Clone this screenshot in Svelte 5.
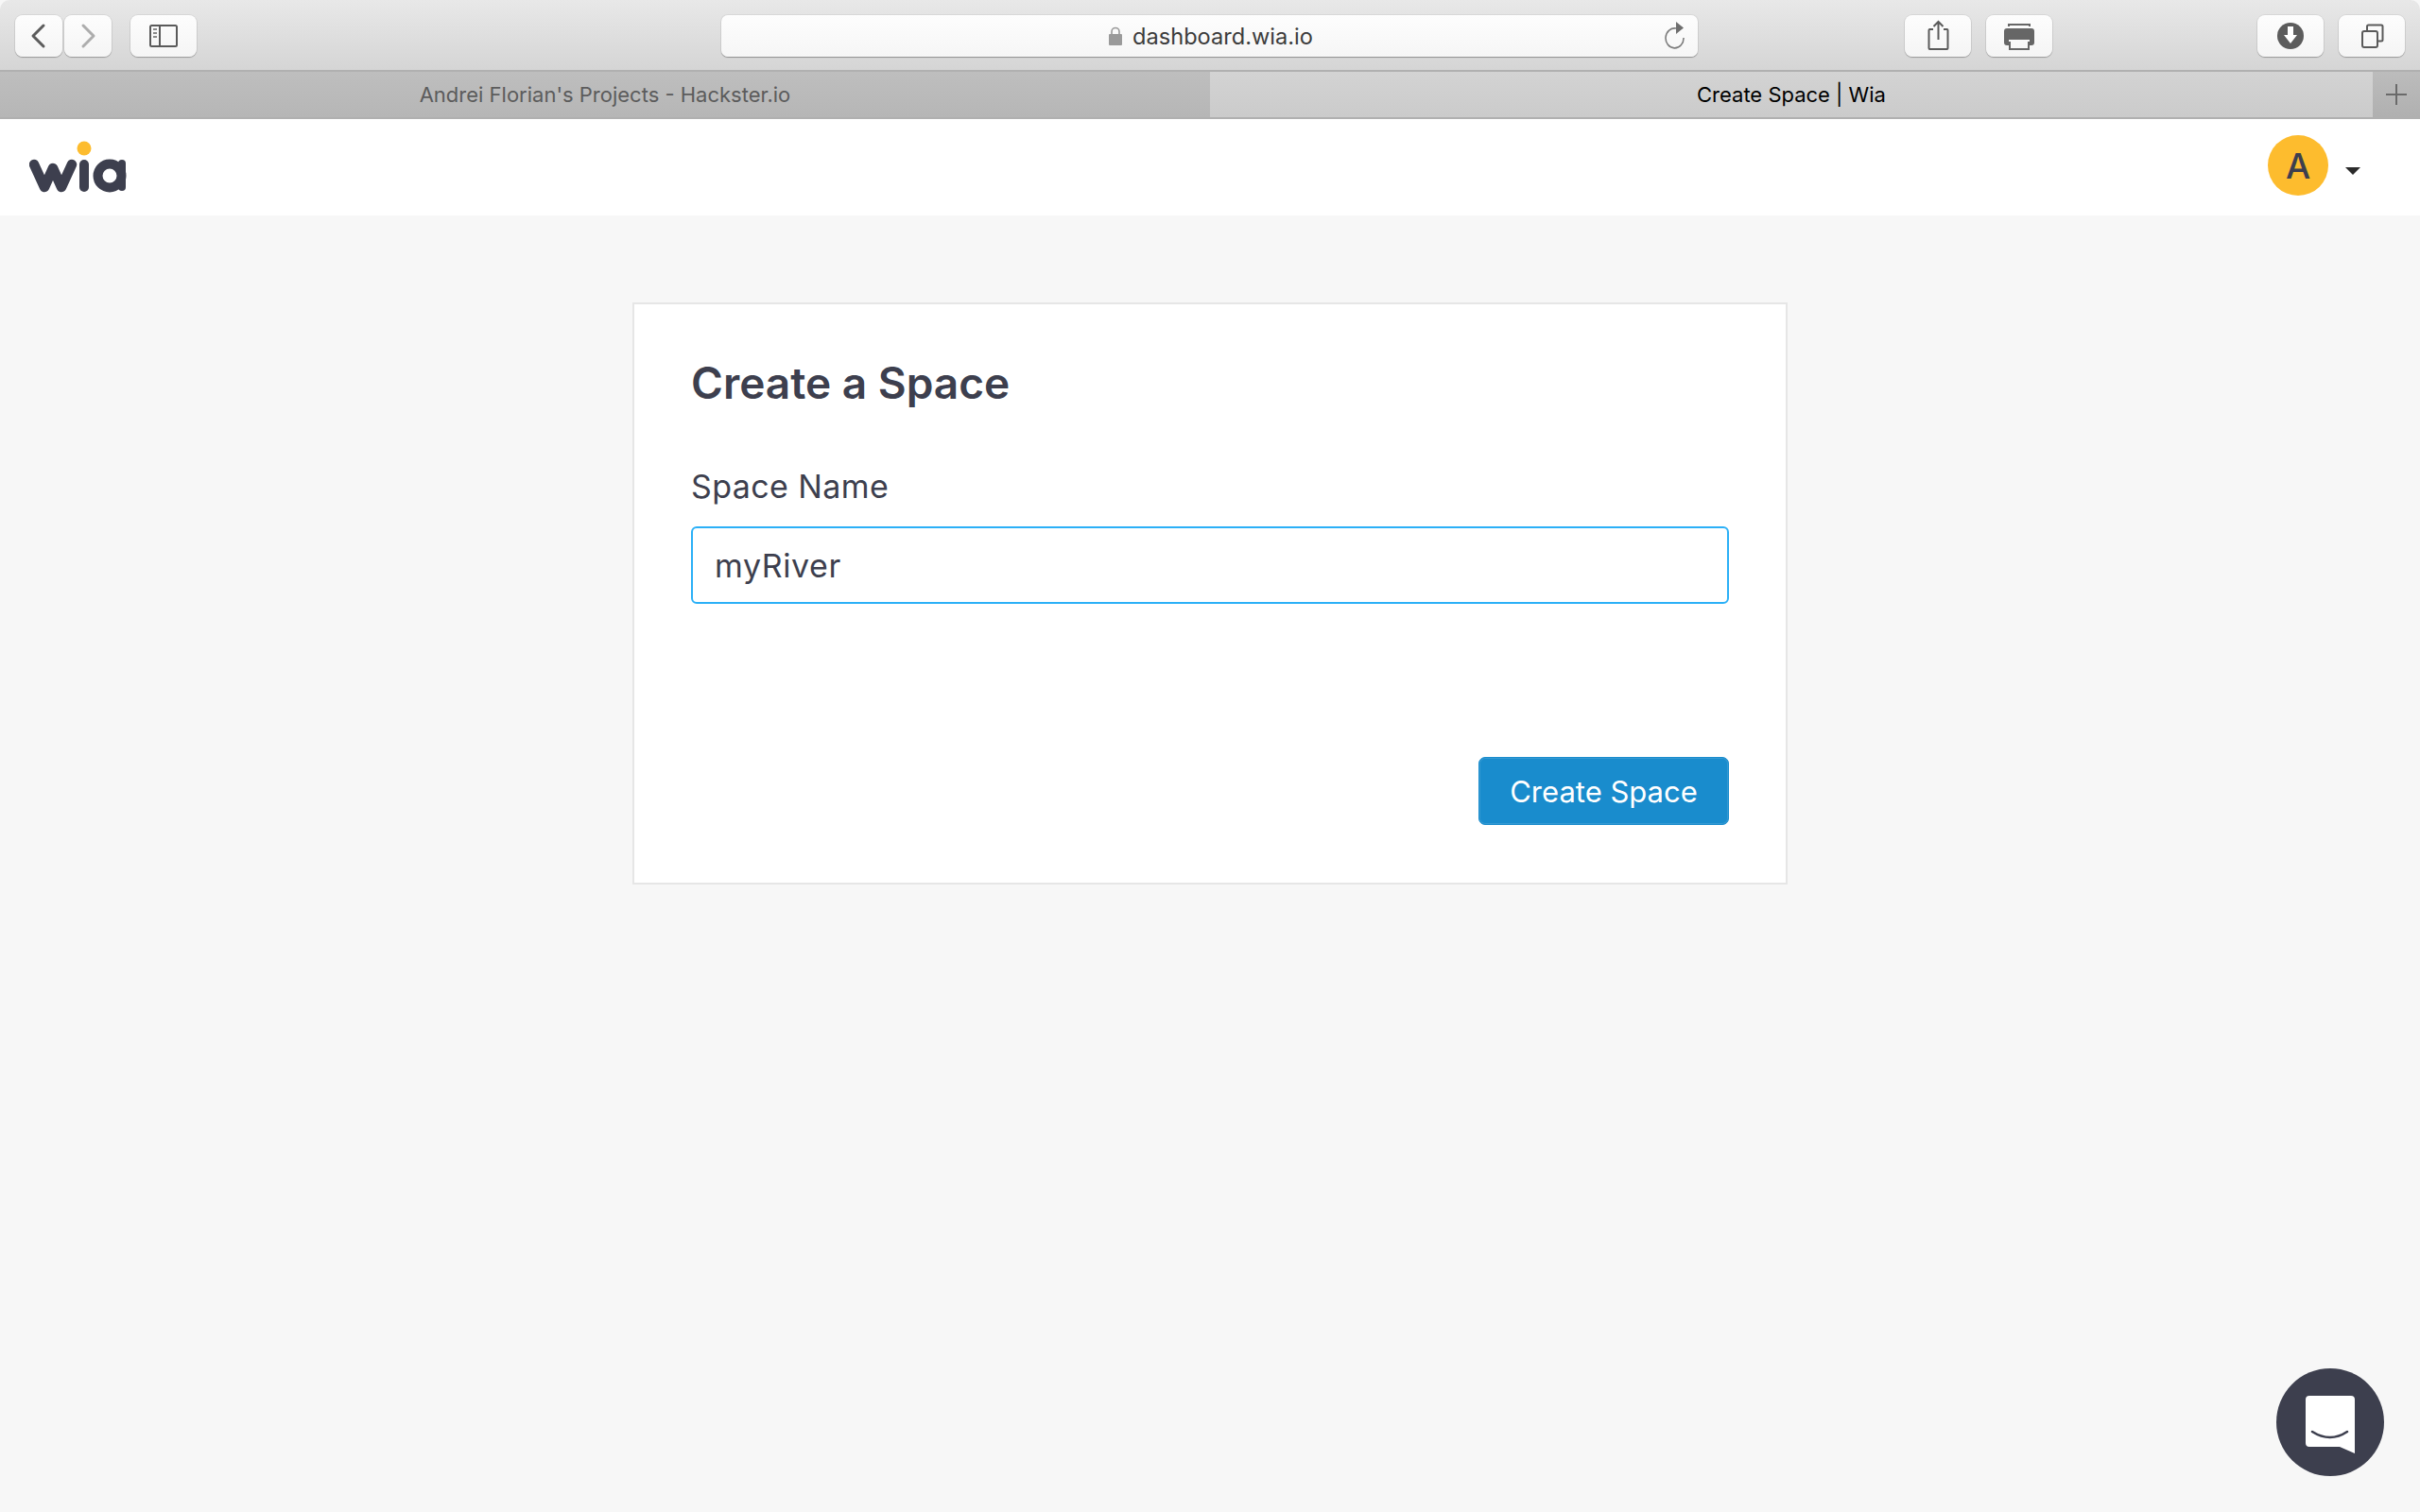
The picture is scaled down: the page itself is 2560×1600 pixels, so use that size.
<script>
	let spaceName = 'myRiver';
</script>

<div class="window">
	<div class="toolbar">
		<div class="group">
			<div class="nav-pair">
				<button class="tool nav" aria-label="Back">
					<svg width="50" height="44" viewBox="0 0 50 44"><path d="M30 11 L19 22 L30 33" fill="none" stroke="#5c5c5c" stroke-width="3" stroke-linecap="round" stroke-linejoin="round"/></svg>
				</button>
				<button class="tool nav" aria-label="Forward">
					<svg width="50" height="44" viewBox="0 0 50 44"><path d="M20 11 L31 22 L20 33" fill="none" stroke="#adadad" stroke-width="3" stroke-linecap="round" stroke-linejoin="round"/></svg>
				</button>
			</div>
			<button class="tool wide" aria-label="Sidebar">
				<svg width="70" height="44" viewBox="0 0 70 44">
					<rect x="21" y="11" width="28" height="22" rx="1.5" fill="none" stroke="#5a5a5a" stroke-width="2"/>
					<path d="M31 11 V33" stroke="#5a5a5a" stroke-width="2"/>
					<path d="M24 15 H28 M24 19 H28 M24 23 H28" stroke="#8a8a8a" stroke-width="2"/>
				</svg>
			</button>
		</div>

		<div class="url">
			<span class="address">
				<svg width="16" height="20" viewBox="0 0 16 20"><path d="M4 9 V5.5 a4 4 0 0 1 8 0 V9" fill="none" stroke="#9a9a9a" stroke-width="1.6"/><rect x="1" y="8" width="14" height="12" rx="1" fill="#9a9a9a"/></svg>
				dashboard.wia.io
			</span>
			<svg class="reload" width="24" height="32" viewBox="0 0 24 32"><path d="M13 8 A9.5 10.5 0 1 0 21 18" fill="none" stroke="#7c7c7c" stroke-width="1.6"/><path d="M13 1 L21 7.5 L13 14 Z" fill="#6e6e6e"/></svg>
		</div>

		<div class="group right">
			<div class="pair">
				<button class="tool wide" aria-label="Share">
					<svg width="70" height="44" viewBox="0 0 70 44">
						<path d="M30 17 H26.5 a1 1 0 0 0 -1 1 V37 a1 1 0 0 0 1 1 H44.5 a1 1 0 0 0 1 -1 V18 a1 1 0 0 0 -1 -1 H41" transform="translate(0 -2)" fill="none" stroke="#5a5a5a" stroke-width="2"/>
						<path d="M35.5 7 V26 M30.5 12 L35.5 7 L40.5 12" fill="none" stroke="#5a5a5a" stroke-width="2"/>
					</svg>
				</button>
				<button class="tool wide" aria-label="Print">
					<svg width="70" height="44" viewBox="0 0 70 44">
						<path d="M24 12 V10 H46 V12" fill="none" stroke="#666" stroke-width="2"/>
						<path d="M19 17 a3 3 0 0 1 3 -3 H48 a3 3 0 0 1 3 3 V29 a3 3 0 0 1 -3 3 H46 V26 H24 V32 H22 a3 3 0 0 1 -3 -3 Z" fill="#666"/>
						<path d="M25 28 V36 H45 V28" fill="none" stroke="#666" stroke-width="2"/>
					</svg>
				</button>
			</div>
			<div class="pair">
				<button class="tool wide" aria-label="Downloads">
					<svg width="70" height="44" viewBox="0 0 70 44">
						<circle cx="35" cy="22" r="14" fill="#5c5c5c"/>
						<path d="M32 12 H38 V21 H42 L35 30 L28 21 H32 Z" fill="#fff"/>
					</svg>
				</button>
				<button class="tool wide" aria-label="Tabs">
					<svg width="70" height="44" viewBox="0 0 70 44">
						<rect x="25" y="17" width="16" height="17" rx="2" fill="none" stroke="#5a5a5a" stroke-width="2"/>
						<path d="M30 17 V12 a1.5 1.5 0 0 1 1.5 -1.5 H45 a1.5 1.5 0 0 1 1.5 1.5 V26 a1.5 1.5 0 0 1 -1.5 1.5 H41" fill="none" stroke="#5a5a5a" stroke-width="2"/>
					</svg>
				</button>
			</div>
		</div>
	</div>

	<div class="tabs">
		<div class="tab inactive">Andrei Florian's Projects - Hackster.io</div>
		<div class="tab active">Create Space | Wia</div>
		<div class="new-tab">
			<svg width="24" height="24" viewBox="0 0 24 24"><path d="M12 1 V23 M1 12 H23" stroke="#6a6a6a" stroke-width="2"/></svg>
		</div>
	</div>

	<header class="topbar">
		<svg class="logo" width="104" height="60" viewBox="0 0 104 60" role="img" aria-label="wia">
			<g fill="none" stroke="#3d3f4e" stroke-linecap="round" stroke-linejoin="round">
				<path d="M5 25 L16 49 L25 29 L34 49 L45 25" stroke-width="10.5"/>
				<path d="M58 25 V49" stroke-width="10"/>
				<circle cx="85" cy="37" r="12.5" stroke-width="10"/>
				<path d="M98 24 V49" stroke-width="8"/>
			</g>
			<circle cx="58" cy="8" r="7.5" fill="#fdbc2e"/>
		</svg>
		<div class="account">
			<span class="avatar">A</span>
			<span class="caret"></span>
		</div>
	</header>

	<main class="page">
		<section class="card">
			<h1>Create a Space</h1>
			<label for="space-name">Space Name</label>
			<input id="space-name" type="text" readonly value={spaceName} />
			<div class="actions">
				<button class="primary">Create Space</button>
			</div>
		</section>
	</main>
</div>

<button class="chat" aria-label="Open chat">
	<svg width="54" height="62" viewBox="0 0 54 62">
		<path d="M5 0 H49 a4 4 0 0 1 4 4 V61 L37 54 H5 a4 4 0 0 1 -4 -4 V4 a4 4 0 0 1 4 -4 Z" fill="#fff"/>
		<path d="M8 38 Q27 50 45 38" fill="none" stroke="#3d3f4e" stroke-width="2.6" stroke-linecap="round"/>
	</svg>
</button>

<style>
	:global(body) {
		margin: 0;
		background: #f7f7f7;
		font-family: Inter, "Liberation Sans", sans-serif;
	}

	.window {
		min-height: 1600px;
		display: flex;
		flex-direction: column;
		background: #f7f7f7;
	}

	.toolbar {
		height: 76px;
		box-sizing: border-box;
		padding: 16px 16px 0;
		display: flex;
		justify-content: space-between;
		align-items: flex-start;
		background: linear-gradient(#e8e8e8, #d5d5d5);
		border-radius: 10px 10px 0 0;
		border-bottom: 2px solid #b0b0b0;
		position: relative;
	}

	.group {
		display: flex;
		gap: 20px;
		width: 528px;
	}

	.group.right {
		justify-content: space-between;
		gap: 0;
		width: 529px;
	}

	.nav-pair {
		display: flex;
		gap: 2px;
	}

	.pair {
		display: flex;
		gap: 16px;
	}

	.tool {
		padding: 0;
		border: none;
		height: 44px;
		background: linear-gradient(#fdfdfd, #f5f5f5);
		border-radius: 8px;
		box-shadow: 0 1px 1px rgba(0, 0, 0, 0.25), 0 0 0 1px rgba(0, 0, 0, 0.06);
		display: block;
	}

	.tool svg {
		display: block;
	}

	.nav {
		width: 50px;
	}

	.wide {
		width: 70px;
	}

	.url {
		width: 1033px;
		height: 44px;
		margin-left: -181px;
		margin-right: -181px;
		display: flex;
		align-items: center;
		justify-content: center;
		position: relative;
		background: linear-gradient(#fdfdfd, #f6f6f6);
		border-radius: 7px;
		box-shadow: 0 1px 1px rgba(0, 0, 0, 0.3), 0 0 0 1px rgba(0, 0, 0, 0.05);
	}

	.address {
		display: inline-flex;
		align-items: center;
		gap: 10px;
		font-size: 23.6px;
		color: #3c3c3c;
		margin-left: 2px;
	}

	.reload {
		position: absolute;
		right: 12px;
		top: 6px;
	}

	.tabs {
		height: 50px;
		box-sizing: border-box;
		display: flex;
		border-bottom: 2px solid #b0b0b0;
	}

	.tab {
		display: flex;
		align-items: center;
		justify-content: center;
		font-size: 22px;
	}

	.inactive {
		width: 1280px;
		background: linear-gradient(#bebebe, #b6b6b6);
		color: #5c5c5c;
	}

	.active {
		width: 1230px;
		background: linear-gradient(#d3d3d3, #cbcbcb);
		color: #000;
	}

	.new-tab {
		width: 50px;
		display: flex;
		align-items: center;
		justify-content: center;
		background: linear-gradient(#bcbcbc, #b0b0b0);
	}

	.topbar {
		height: 102px;
		display: flex;
		justify-content: space-between;
		align-items: flex-start;
		box-sizing: border-box;
		padding: 0 63px 0 31px;
		background: #fff;
	}

	.logo {
		display: block;
		margin-top: 23px;
	}

	.account {
		display: flex;
		align-items: flex-start;
		gap: 18px;
		margin-top: 17px;
	}

	.avatar {
		width: 64px;
		height: 64px;
		border-radius: 50%;
		background: #fdbc2e;
		color: #3d3f4e;
		display: flex;
		align-items: center;
		justify-content: center;
		font-size: 37px;
		font-weight: 500;
	}

	.caret {
		margin-top: 34px;
		border-left: 8px solid transparent;
		border-right: 8px solid transparent;
		border-top: 8px solid #2b2b2b;
	}

	.page {
		padding-top: 92px;
	}

	.card {
		width: 1222px;
		height: 616px;
		margin: 0 auto;
		box-sizing: border-box;
		padding: 55px 60px 0;
		background: #fff;
		border: 2px solid #e6e6e6;
		display: flex;
		flex-direction: column;
		color: #3d3f4e;
	}

	h1 {
		margin: 0 0 61px;
		font-size: 46px;
		line-height: 56px;
		font-weight: 600;
		color: #3d3f4e;
	}

	label {
		font-size: 34px;
		line-height: 42px;
		letter-spacing: 0.4px;
		margin-bottom: 21px;
	}

	input {
		height: 82px;
		box-sizing: border-box;
		padding: 0 23px;
		border: 2px solid #2bb0f7;
		border-radius: 6px;
		outline: none;
		font-family: inherit;
		font-size: 34px;
		letter-spacing: 0.6px;
		color: #3d3f4e;
		background: #fff;
	}

	.actions {
		margin-top: 162px;
		display: flex;
		justify-content: flex-end;
	}

	.primary {
		width: 265px;
		height: 72px;
		padding: 0;
		border: 1px solid #198ccd;
		border-radius: 7px;
		box-shadow: inset 0 0 0 1px rgba(255, 255, 255, 0.12);
		background: #198ccd;
		color: #fff;
		font-family: inherit;
		font-size: 31px;
	}

	.chat {
		position: fixed;
		right: 38px;
		bottom: 38px;
		width: 114px;
		height: 114px;
		padding: 0;
		border: none;
		border-radius: 50%;
		background: #3d3f4e;
		display: flex;
		align-items: center;
		justify-content: center;
	}

	.chat svg {
		margin-top: 5px;
	}
</style>
